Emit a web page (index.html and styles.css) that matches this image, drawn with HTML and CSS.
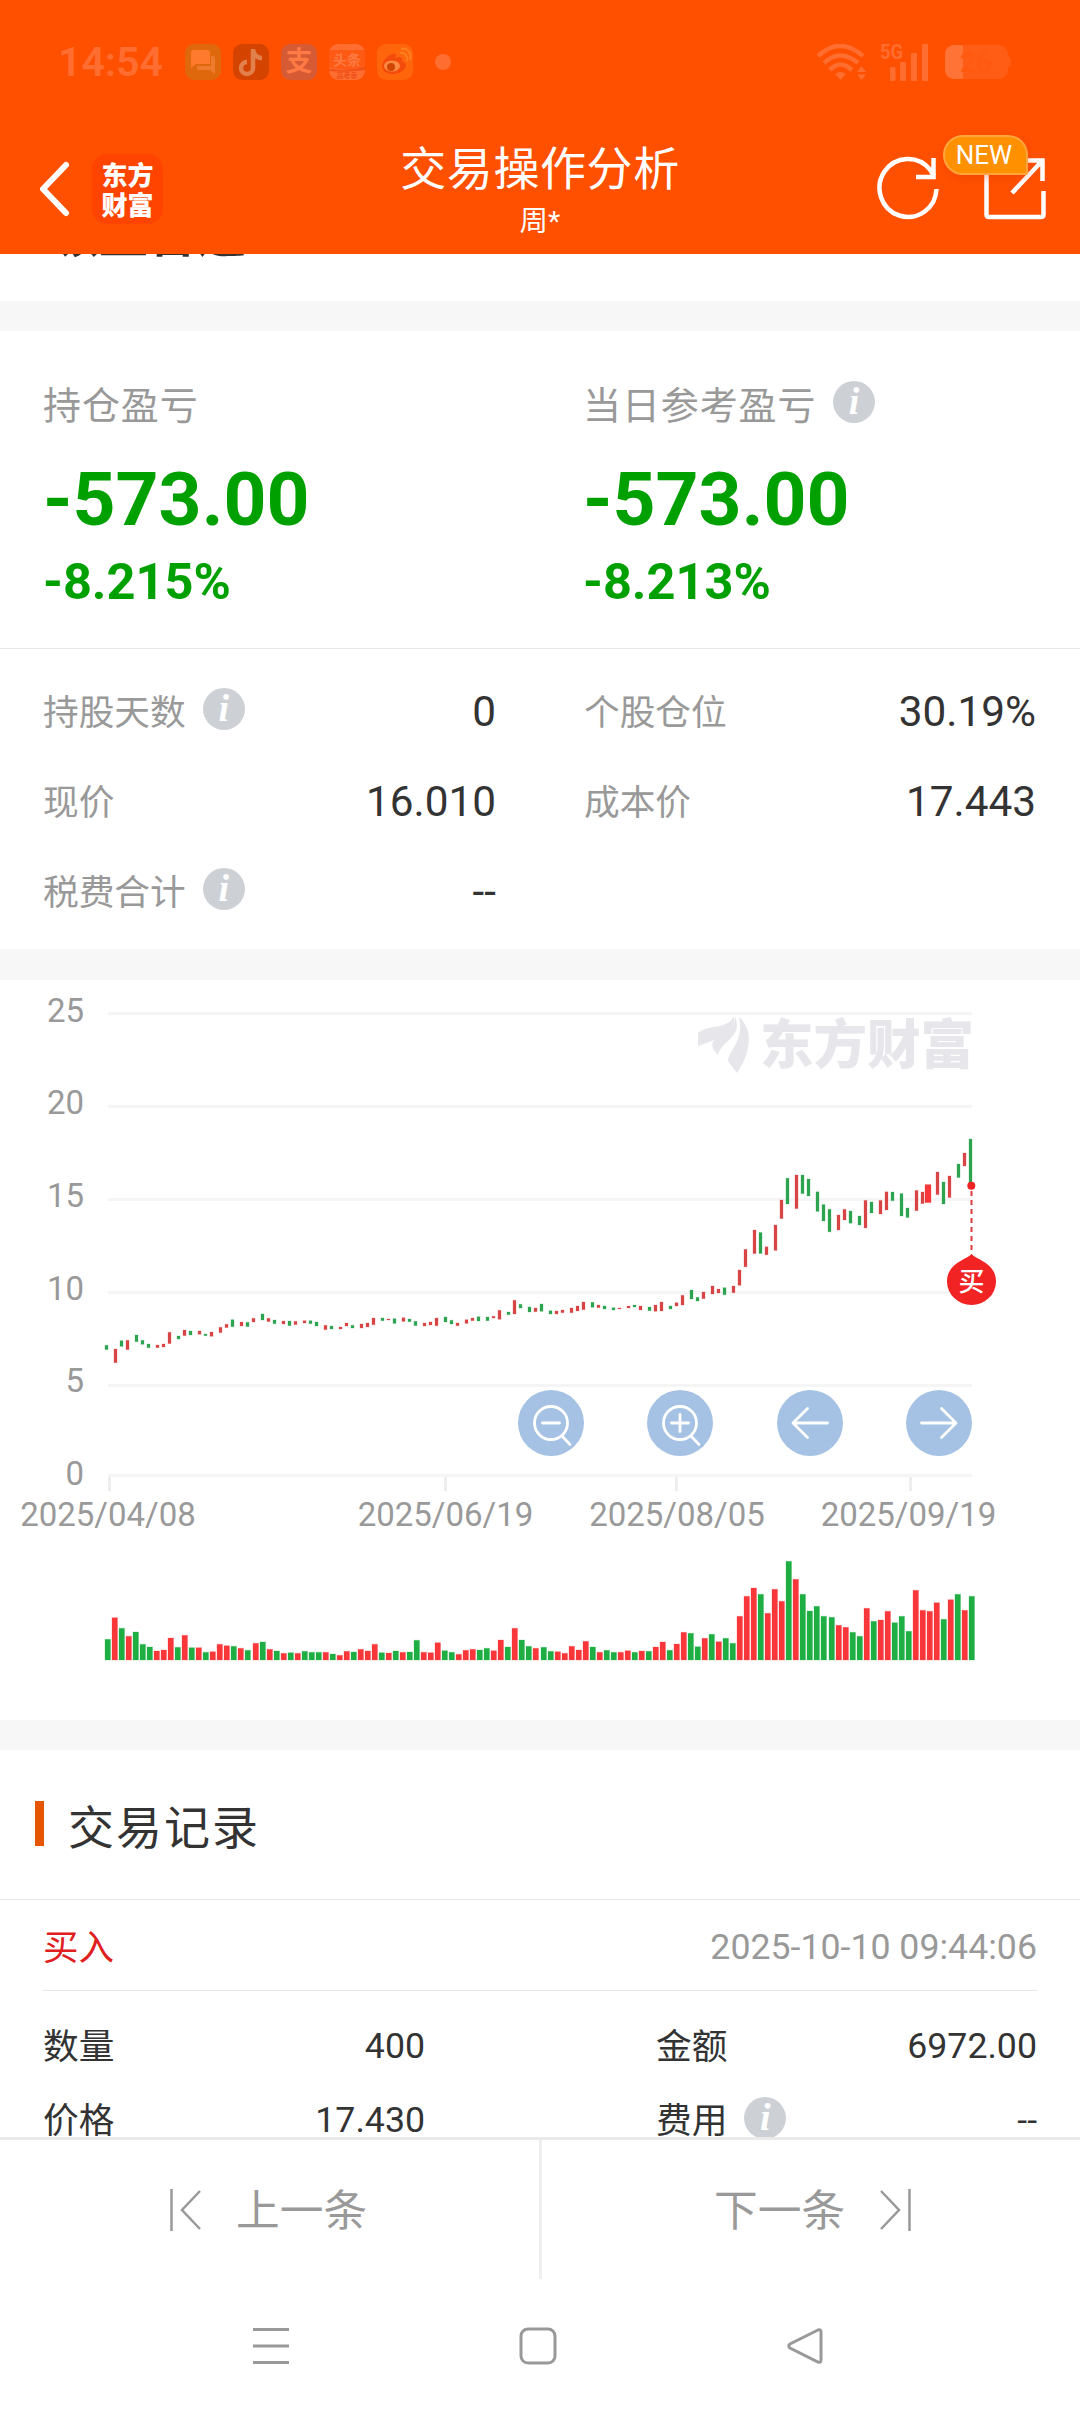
FILE: index.html
```html
<!DOCTYPE html>
<html lang="zh-CN">
<head>
    <meta charset="UTF-8">
    <meta name="viewport" content="width=device-width, initial-scale=1.0">
    <title>交易操作分析</title>
    <link rel="stylesheet" href="styles.css">
</head>
<body>
<div class="phone">

    <!-- Header: status bar + title bar -->
    <header class="header">
        <div class="status-bar">
            <span class="clock">14:54</span>
            <div class="app-icons">
                <svg width="36" height="36" viewBox="0 0 36 36"><rect width="36" height="36" rx="9" fill="#e0680c"/><path d="M8 6h15a2 2 0 0 1 2 2v12H11l-5 4V8a2 2 0 0 1 2-2z" fill="#ff7a2c"/><path d="M26 12h2a2 2 0 0 1 2 2v16l-5-4H14a2 2 0 0 1-2-2v-2h14z" fill="#ee7a2e"/></svg>
                <svg width="36" height="36" viewBox="0 0 36 36"><rect width="36" height="36" rx="9" fill="#d44400"/><path d="M20 5v19a6 6 0 1 1-6-6M20 6c1 5 4 8 9 8" fill="none" stroke="#e2804c" stroke-width="4.5"/></svg>
                <svg width="36" height="36" viewBox="0 0 36 36"><rect width="36" height="36" rx="9" fill="#d65a34"/><text x="18" y="27" text-anchor="middle" class="app-glyph" font-size="27" fill="#ff7a44">支</text></svg>
                <svg width="36" height="36" viewBox="0 0 36 36"><rect width="36" height="36" rx="9" fill="#ff6e30"/><path d="M0 6h36v18q-18 2-36 0z" fill="#ff5a14"/><path d="M0 25q20 2 36-2v3q-18 3-36 1z" fill="#f0501a"/><text x="18" y="21" text-anchor="middle" class="app-glyph" font-size="14" fill="#ff7a44">头条</text><text x="18" y="34" text-anchor="middle" class="app-glyph" font-size="7" fill="#f0501a">高考季</text></svg>
                <svg width="36" height="36" viewBox="0 0 36 36"><rect width="36" height="36" rx="9" fill="#ff660c"/><path d="M5 22c0-6 9-14 13-12 2 1 1 3 0 4 5-2 8-1 7 3 8 3 3 13-10 13-6 0-10-4-10-8z" fill="#f44a0c"/><ellipse cx="15" cy="22" rx="8" ry="5.500" fill="#ff8a44"/><circle cx="14" cy="23" r="4" fill="#d04600"/><path d="M23 9c5-1 8 3 7 8M24 5c7-1 11 4 9 11" fill="none" stroke="#ff7e22" stroke-width="2"/></svg>
            </div>
            <i class="more-dot"></i>
            <svg class="wifi" width="50" height="36" viewBox="0 0 50 36" fill="none" stroke="#ff6e30" stroke-width="4.500">
                <path d="M2 12Q24-8 47 12M8 19Q24 4 42 19M14 26Q24 15 36 26"/>
                <path d="M19 30q5.500-4 11 0l-5.500 6z" fill="#ff6e30" stroke="none"/>
                <path d="M41 28l4.500-6 4.500 6zM41 30.500h9l-4.500 5.500z" fill="#ff6e30" stroke="none"/>
            </svg>
            <svg class="signal" width="50" height="38" viewBox="0 0 50 38" fill="#ff6e30">
                <text x="0" y="16" font-size="21" font-weight="700" textLength="23" lengthAdjust="spacingAndGlyphs">5G</text>
                <rect x="10" y="24" width="5.500" height="14" rx="1"/><rect x="20" y="19" width="6" height="19" rx="1"/><rect x="31" y="10" width="6" height="28" rx="1"/><rect x="42" y="1" width="6" height="37" rx="1"/>
            </svg>
            <svg class="battery" width="67" height="34" viewBox="0 0 67 34">
                <path d="M9 0h45a9 9 0 0 1 9 9v2q3 1 3 6t-3 6v2a9 9 0 0 1-9 9H9a9 9 0 0 1-9-9V9a9 9 0 0 1 9-9z" fill="#ff5d16"/>
                <path d="M9 0h9v34H9a9 9 0 0 1-9-9V9a9 9 0 0 1 9-9z" fill="#ff7336"/>
                <text x="15" y="27" font-size="28" font-weight="700" fill="#ff5a10">26</text>
            </svg>
        </div>

        <div class="title-bar">
            <div class="title-left">
                <svg width="34" height="56" viewBox="0 0 34 56"><path d="M28 4L5 28l23 24" fill="none" stroke="#fff" stroke-width="6" stroke-linecap="round" stroke-linejoin="round"/></svg>
                <div class="brand">
                    <span>东方</span>
                    <span>财富</span>
                </div>
            </div>
            <div class="title-text">
                <h1>交易操作分析</h1>
                <p>周*</p>
            </div>
            <div class="title-right">
                <svg width="66" height="66" viewBox="0 0 66 66" fill="none" stroke="#fff" stroke-width="4.500">
                    <path d="M60.500 33A28.500 29 0 1 1 54 13.500L58 20"/>
                    <path d="M57.500 2v19H40"/>
                </svg>
                <div class="share">
                    <svg width="62" height="62" viewBox="0 0 62 62" fill="none" stroke="#fff" stroke-width="4.500">
                        <path d="M30 2.500H4a1.500 1.500 0 0 0-1.500 1.500V56.500q0 2.500 2.500 2.500h52q2.500 0 2.500-2.500V33M40 2.500h18.500V23M58 3L28 35"/>
                    </svg>
                    <span class="new-badge">NEW</span>
                </div>
            </div>
        </div>
    </header>

    <!-- Scrolled content -->
    <main class="content">
        <div class="stock-name">领益智造</div>

        <section class="profit">
            <div class="profit-item">
                <div class="profit-label">持仓盈亏</div>
                <div class="profit-value">-573.00</div>
                <div class="profit-rate">-8.215%</div>
            </div>
            <div class="profit-item">
                <div class="profit-label">当日参考盈亏<i class="info">i</i></div>
                <div class="profit-value">-573.00</div>
                <div class="profit-rate">-8.213%</div>
            </div>
        </section>

        <section class="details">
            <div class="detail"><span class="name">持股天数<i class="info">i</i></span><span class="value">0</span></div>
            <div class="detail"><span class="name">个股仓位</span><span class="value">30.19%</span></div>
            <div class="detail"><span class="name">现价</span><span class="value">16.010</span></div>
            <div class="detail"><span class="name">成本价</span><span class="value">17.443</span></div>
            <div class="detail"><span class="name">税费合计<i class="info">i</i></span><span class="value">--</span></div>
        </section>

        <!-- K-line chart and volume bars, filled by chart.js -->
        <section class="chart">
            <svg width="1080" height="740" viewBox="0 0 1080 740">
                <g class="grid">
                    <path d="M108 33.500H972M108 126.500H972M108 219.500H972M108 312.500H972M108 405.500H972M108 495.500H972"/>
                    <path class="ticks" d="M109.500 497v14M445.500 497v14M676.500 497v14M910.500 497v14"/>
                </g>
                <g class="axis-y">
                    <text x="84" y="42">25</text>
                    <text x="84" y="134">20</text>
                    <text x="84" y="227">15</text>
                    <text x="84" y="320">10</text>
                    <text x="84" y="412">5</text>
                    <text x="84" y="505">0</text>
                </g>
                <g class="axis-x">
                    <text x="108" y="546">2025/04/08</text>
                    <text x="445.500" y="546">2025/06/19</text>
                    <text x="677" y="546">2025/08/05</text>
                    <text x="908.500" y="546">2025/09/19</text>
                </g>
                <g class="watermark">
                    <path d="M698 66v-13c10-9 30-3 36-17 2 17-16 23-36 30z"/>
                    <path d="M735 36c5 14-1 19-7 25-5 5-8 7-10 14-4-4-7-9-5-13 6-9 23-10 22-26z"/>
                    <path d="M739 37c14 12 13 34-2 56l-9-12c1-12 16-18 11-44z"/>
                    <text x="760" y="84">东方财富</text>
                </g>
                <g id="candles"></g>
                <g id="volumes"></g>
                <g class="buy-mark">
                    <path class="buy-line" d="M971.500 211V274"/>
                    <circle cx="971.300" cy="205.700" r="4"/>
                    <path d="M971.500 274C977 280 996 283 996 301.500a24.500 23.500 0 0 1-49 0C947 283 966 280 971.500 274z"/>
                    <text x="971.500" y="311">买</text>
                </g>
                <g class="chart-buttons">
                    <g transform="translate(551 443)"><circle class="bg" r="33"/><circle r="16.500"/><path d="M-8.500 0H8.500M11 13l8 8.500"/></g>
                    <g transform="translate(680 443)"><circle class="bg" r="33"/><circle r="16.500"/><path d="M-8.500 0H8.500M0-8.500V8.500M11 13l8 8.500"/></g>
                    <g transform="translate(810 443)"><circle class="bg" r="33"/><path d="M17.500 0H-16M-2.500-14.500L-17 0l14.500 14.500"/></g>
                    <g transform="translate(939 443)"><circle class="bg" r="33"/><path d="M-17.500 0H16M2.500-14.500L17 0 2.500 14.500"/></g>
                </g>
            </svg>
        </section>

        <section class="records">
            <h2>交易记录</h2>
            <div class="record-head">
                <span class="side">买入</span>
                <span class="time">2025-10-10 09:44:06</span>
            </div>
            <div class="record-body">
                <div class="cell"><span class="name">数量</span><span>400</span></div>
                <div class="cell"><span class="name">金额</span><span>6972.00</span></div>
                <div class="cell"><span class="name">价格</span><span>17.430</span></div>
                <div class="cell"><span class="name">费用<i class="info">i</i></span><span>--</span></div>
            </div>
        </section>
    </main>

    <!-- Previous / next record -->
    <footer class="pager">
        <div class="page-btn prev">
            <svg width="32" height="44" viewBox="0 0 32 44"><path d="M1.500 1v42M30 3L12 22l18 19"/></svg>
            <span>上一条</span>
        </div>
        <div class="page-btn next">
            <span>下一条</span>
            <svg width="32" height="44" viewBox="0 0 32 44"><path d="M30.500 1v42M2 3l18 19L2 41"/></svg>
        </div>
    </footer>

    <!-- System navigation -->
    <nav class="system-nav">
        <svg width="38" height="38" viewBox="0 0 38 38"><path d="M1 2.500h36M1 19h36M1 35.500h36"/></svg>
        <svg width="38" height="38" viewBox="0 0 38 38"><rect x="2" y="2" width="34" height="34" rx="7"/></svg>
        <svg width="38" height="38" viewBox="0 0 38 38"><path d="M32 3L4 17q-2.500 2 0 4l28 14q3 1 3-2V5q0-3-3-2z"/></svg>
    </nav>
</div>
<script src="chart.js"></script>
</body>
</html>
```
FILE: styles.css
```css
* {
    box-sizing: border-box;
    margin: 0;
    padding: 0;
}

body {
    background: #fff;
    color: #333;
    font-family: Roboto, "Noto Sans CJK SC", sans-serif;
}

svg {
    display: block;
    flex: none;
}

.phone {
    display: flex;
    flex-direction: column;
    width: 1080px;
    height: 2412px;
    overflow: hidden;
}

/* Header */
.header {
    flex: none;
    height: 254px;
    background: #ff5000;
    color: #fff;
}

.status-bar {
    display: flex;
    align-items: center;
    height: 124px;
    padding-left: 58px;
}

.clock {
    width: 127px;
    font-size: 41px;
    font-weight: 600;
    line-height: 48px;
    color: #ff6e30;
}

.app-icons {
    display: flex;
    gap: 12px;
}

.app-glyph {
    font-weight: 700;
}

.more-dot {
    width: 16px;
    height: 16px;
    margin-left: 22px;
    border-radius: 50%;
    background: #ff6e30;
}

.wifi {
    margin-left: 365px;
}

.signal {
    margin-left: 14px;
}

.battery {
    margin-left: 15px;
}

.title-bar {
    display: grid;
    grid-template-columns: 1fr 300px 1fr;
    height: 130px;
}

.title-left {
    display: flex;
    align-items: center;
    gap: 20px;
    padding-left: 38px;
}

.brand {
    display: flex;
    flex-direction: column;
    align-items: center;
    justify-content: center;
    width: 71px;
    height: 70px;
    border-radius: 15px;
    background: #ff4400;
    font-size: 26px;
    font-weight: 900;
    font-family: "Noto Sans CJK SC", sans-serif;
}

.brand span {
    line-height: 30px;
}

.title-text {
    padding-top: 14px;
    text-align: center;
}

.title-text h1 {
    font-size: 46px;
    font-weight: 400;
    letter-spacing: 0.6px;
    line-height: 62px;
}

.title-text p {
    margin-top: 2px;
    font-size: 28.500px;
    line-height: 40px;
}

.title-right {
    display: flex;
    align-items: center;
    justify-content: flex-end;
    gap: 42px;
    padding-right: 34px;
}

.share {
    position: relative;
}

/* NEW badge sits over the share icon */
.new-badge {
    position: absolute;
    top: -23px;
    left: -41px;
    width: 85px;
    height: 40px;
    border: 2px solid #ffa53c;
    border-radius: 20px 20px 2px 20px;
    background: #ff9000;
    font-size: 26px;
    line-height: 37px;
    padding-right: 3px;
    text-align: center;
    box-shadow: 0 3px 8px rgba(220, 60, 0, 0.3);
}

/* Content */
.content {
    flex: none;
    height: 1883px;
    overflow: hidden;
}

/* Scrolled under the header, only its lower edge shows */
.stock-name {
    height: 119px;
    margin-top: -42px;
    padding-left: 50px;
    border-bottom: 30px solid #f7f7f7;
    font-size: 49px;
    font-weight: 700;
    line-height: 48px;
}

.info {
    display: inline-block;
    flex: none;
    width: 42px;
    height: 42px;
    margin-left: 17px;
    border-radius: 50%;
    background: #cdd1d6;
    color: #fff;
    font-family: "Liberation Serif", serif;
    font-size: 38px;
    font-style: italic;
    font-weight: 700;
    line-height: 41px;
    text-align: center;
}

.profit {
    display: grid;
    grid-template-columns: 1fr 1fr;
    height: 318px;
    border-bottom: 1px solid #e8e8e8;
}

.profit-item {
    padding: 47px 0 0 43px;
}

.profit-label {
    display: flex;
    align-items: center;
    height: 48px;
    color: #999;
    font-size: 38px;
    letter-spacing: 0.9px;
}

.profit-value {
    margin-top: 28px;
    color: #00a000;
    font-size: 75px;
    font-weight: 700;
    line-height: 90px;
}

.profit-rate {
    margin-top: 8px;
    color: #00a000;
    font-size: 50.500px;
    font-weight: 700;
    line-height: 60px;
}

.details {
    display: grid;
    grid-template-columns: 453px 452px;
    grid-auto-rows: 90px;
    column-gap: 88px;
    height: 331px;
    padding: 16px 43px 0;
    border-bottom: 31px solid #f7f7f7;
}

.detail {
    display: flex;
    align-items: center;
    justify-content: space-between;
}

.detail .name {
    display: flex;
    align-items: center;
    padding-bottom: 2px;
    color: #999;
    font-size: 35.700px;
}

.detail .value {
    padding-top: 2px;
    font-size: 42.300px;
}

/* Chart */
.chart {
    height: 770px;
    border-bottom: 30px solid #f7f7f7;
}

.grid {
    fill: none;
    stroke: #f5f5f5;
    stroke-width: 3;
}

.ticks {
    stroke: #eee;
}

.axis-y,
.axis-x {
    fill: #999;
    font-size: 33px;
}

.axis-y {
    text-anchor: end;
}

.axis-x {
    text-anchor: middle;
}

.watermark {
    fill: #e6e6eb;
    font-family: "Noto Sans CJK SC", sans-serif;
    font-size: 53.500px;
    font-weight: 900;
}

.candle,
.volume {
    stroke-opacity: 0.25;
    stroke-width: 1;
}

.candle.up {
    fill: #d94545;
    stroke: #d94545;
}

.candle.down {
    fill: #2da44e;
    stroke: #2da44e;
}

.volume.up {
    fill: #f9373a;
    stroke: #f9373a;
}

.volume.down {
    fill: #1eae43;
    stroke: #1eae43;
}

.buy-mark {
    fill: #f22323;
}

.buy-line {
    stroke: #dc3c3c;
    stroke-width: 2;
    stroke-dasharray: 5 4;
}

.buy-mark text {
    fill: #fff;
    font-size: 26px;
    font-weight: 500;
    text-anchor: middle;
}

.chart-buttons {
    fill: none;
    stroke: #fff;
    stroke-width: 2.800;
    stroke-linecap: round;
    stroke-linejoin: round;
}

.chart-buttons .bg {
    fill: #a5c2e4;
    stroke: none;
}

/* Trade records */
.records h2 {
    display: flex;
    align-items: center;
    height: 150px;
    padding: 0 0 2px 35px;
    border-bottom: 1px solid #e8e8e8;
    font-size: 46px;
    font-weight: 400;
    letter-spacing: 2px;
}

.records h2::before {
    content: "";
    width: 9px;
    height: 45px;
    margin-right: 24px;
    background: #e65500;
}

.record-head {
    display: flex;
    align-items: center;
    justify-content: space-between;
    height: 91px;
    margin: 0 43px;
    padding-top: 4px;
    border-bottom: 1px solid #e8e8e8;
    font-size: 36px;
}

.side {
    padding-bottom: 5px;
    color: #e02020;
    font-size: 35.500px;
}

.time {
    color: #999;
    font-size: 35.700px;
}

.record-body {
    display: grid;
    grid-template-columns: 382px 381px;
    grid-auto-rows: 74px;
    justify-content: space-between;
    padding: 18px 43px 0;
    font-size: 35.700px;
}

.cell {
    display: flex;
    align-items: center;
    justify-content: space-between;
}

.cell .name {
    display: flex;
    align-items: center;
    padding-bottom: 5px;
}

/* Pager */
.pager {
    display: grid;
    grid-template-columns: 542px 538px;
    flex: none;
    height: 142px;
    border-top: 3px solid #eaeaea;
    color: #999;
    font-size: 43.700px;
}

.page-btn {
    display: flex;
    align-items: center;
    gap: 34px;
}

.page-btn span {
    padding-bottom: 5px;
}

.page-btn svg {
    fill: none;
    stroke: #999;
    stroke-width: 2.500;
}

.prev {
    padding-left: 170px;
    border-right: 3px solid #eee;
}

.next {
    padding-left: 172px;
}

/* System navigation */
.system-nav {
    display: flex;
    align-items: center;
    gap: 229px;
    height: 133px;
    padding: 0 0 0 252px;
}

.system-nav svg {
    fill: none;
    stroke: #999;
    stroke-width: 3;
}
```
FILE: chart.js
```js
// Price range per day: [1 = up / 0 = down, top, height]
const candles = [
    [0,365.3,4.3],[1,369,13.7],[0,360.7,5.7],[1,360.3,9.3],[0,355,6.7],[0,360.3,4],[0,364,3.7],[1,365,2.7],
    [1,364,3],[1,352.3,11.3],[0,356,3],[1,350,5.7],[0,351,4],[1,351,3.3],[0,354,1.7],[1,352,4.3],
    [1,347.3,5.3],[1,344.3,3.3],[0,339.7,7],[1,342,4],[0,342.3,4.3],[1,338.3,3.7],[0,334,6],[1,338.3,3.3],
    [0,340,3.7],[1,341,3],[0,341,4.7],[1,341.3,3.3],[1,340.7,2.3],[0,340.7,3],[0,342,4],[1,345.3,4.3],
    [0,346,3],[1,347,2],[1,343,3],[0,345.3,2.7],[1,344,4],[1,343,4],[1,338,6.7],[0,338,2.7],
    [1,339,1],[0,338.7,4.7],[1,337.7,3.7],[0,339,2.7],[0,341.3,4.3],[1,343,3],[1,342,3],[1,338,7.7],
    [0,337,5],[0,340.3,3.7],[1,343,2.7],[1,339.7,3.7],[1,338,2.7],[0,336.7,4.3],[0,337,3.7],[1,336.3,1.7],
    [1,330.3,9],[0,332,2.7],[1,320.3,13.7],[0,324.3,3.7],[0,327,5],[1,328,3.7],[0,324,7.3],[0,330.7,3.3],
    [1,331,3],[1,330,2.7],[1,328,4.7],[1,326,5],[1,322,7.7],[0,322.3,5],[1,325,2.7],[0,326,3],
    [0,327.7,2.3],[1,328,1],[1,326,2],[0,325,2],[1,326,4],[0,327,3.7],[1,325,6.3],[1,322,9],
    [0,326,3],[1,322.7,3.3],[1,315.3,9.7],[0,310,9],[0,317.3,3.7],[1,312,6.7],[1,306,8],[1,309,4],
    [0,307.7,7],[1,306,6.7],[1,290,15.3],[1,269.3,17.5],[1,250,23.6],[0,252.5,21],[1,266.8,8],[1,245,25.4],
    [1,220,18.6],[0,198.2,25.8],[1,195,33.6],[0,195,18.6],[0,199,17],[0,211.8,19.6],[0,224.6,16.4],[0,229.3,22.5],
    [1,235,15],[1,229.3,10.7],[0,231,12.2],[0,236,9],[1,220.4,27.5],[0,222,11],[1,220.4,13.6],[1,211.8,18.2],
    [0,212,8.7],[0,213.6,22.4],[0,228,9.5],[1,210.4,20.3],[1,212,11.6],[1,204.6,18],[1,192,22.6],[0,202,22],
    [1,196,21.5],[0,184,13.5],[1,173,13],[0,159,44.6]
];

// Volume bar heights, negative = down day
const volumes = [
    -20.7,42.3,-31.7,23.7,-28,-15.7,-13,9,10,22,-12.7,24.7,-12.3,12.3,-7.7,8.3,15.7,14.3,-13.7,11.7,
    -9.7,16.7,-18,10.7,-9,6.7,-7.3,6.7,-8.7,-7.7,-7.7,7.7,-6,4.7,8.7,-8,10.7,9,15.7,-7.3,
    7,-9,7.7,-8,-19.7,7.7,7.3,17.3,-9.3,-7.7,5.7,9.7,10.7,-10,-11.7,9.3,20,-13,31.7,-20,
    -13.7,11.7,-12.7,-8.7,8.3,6.7,13.7,10,18.7,-13,7.7,-9.7,-7.7,7.7,9.3,-7.7,9,-8.7,13,18,
    -9.7,16,27.7,-26.7,-13.3,21.7,-25.7,18.3,-21.7,-16.7,43.7,63.7,72,-65.7,46.7,70.7,58.7,-98.7,80.7,-65.7,
    -49,-53.7,-43.7,-42.7,34.7,32.7,-27.7,-23.7,51.7,-38.7,40,48.7,-37.3,-43.7,-28.7,69.7,49.7,48.7,57.3,-40.7,
    60.3,-65.7,49.7,-63.7
];

const LEFT = 105;
const STEP = 864 / 123;
const BASELINE = 680;
const SELECTED = 117; // drawn wider and brighter

function addRect(parent, cls, x, y, width, height) {
    const rect = document.createElementNS('http://www.w3.org/2000/svg', 'rect');
    rect.setAttribute('class', cls);
    rect.setAttribute('x', x);
    rect.setAttribute('y', y);
    rect.setAttribute('width', width);
    rect.setAttribute('height', height);
    parent.appendChild(rect);
}

const candleGroup = document.getElementById('candles');
candles.forEach(([up, top, height], i) => {
    // columns are snapped to a 3px raster
    const x = LEFT + 3 * Math.round(i * STEP / 3 + 0.25);
    const dir = up ? 'up' : 'down';
    if (i === SELECTED) {
        addRect(candleGroup, 'volume up', x - 2, top, 6, height);
    } else {
        addRect(candleGroup, 'candle ' + dir, x, top, 3, height);
    }
});

const volumeGroup = document.getElementById('volumes');
volumes.forEach((v, i) => {
    const h = Math.abs(v);
    addRect(volumeGroup, 'volume ' + (v > 0 ? 'up' : 'down'), LEFT + Math.round(i * STEP), BASELINE - h, 5.5, h);
});
```
